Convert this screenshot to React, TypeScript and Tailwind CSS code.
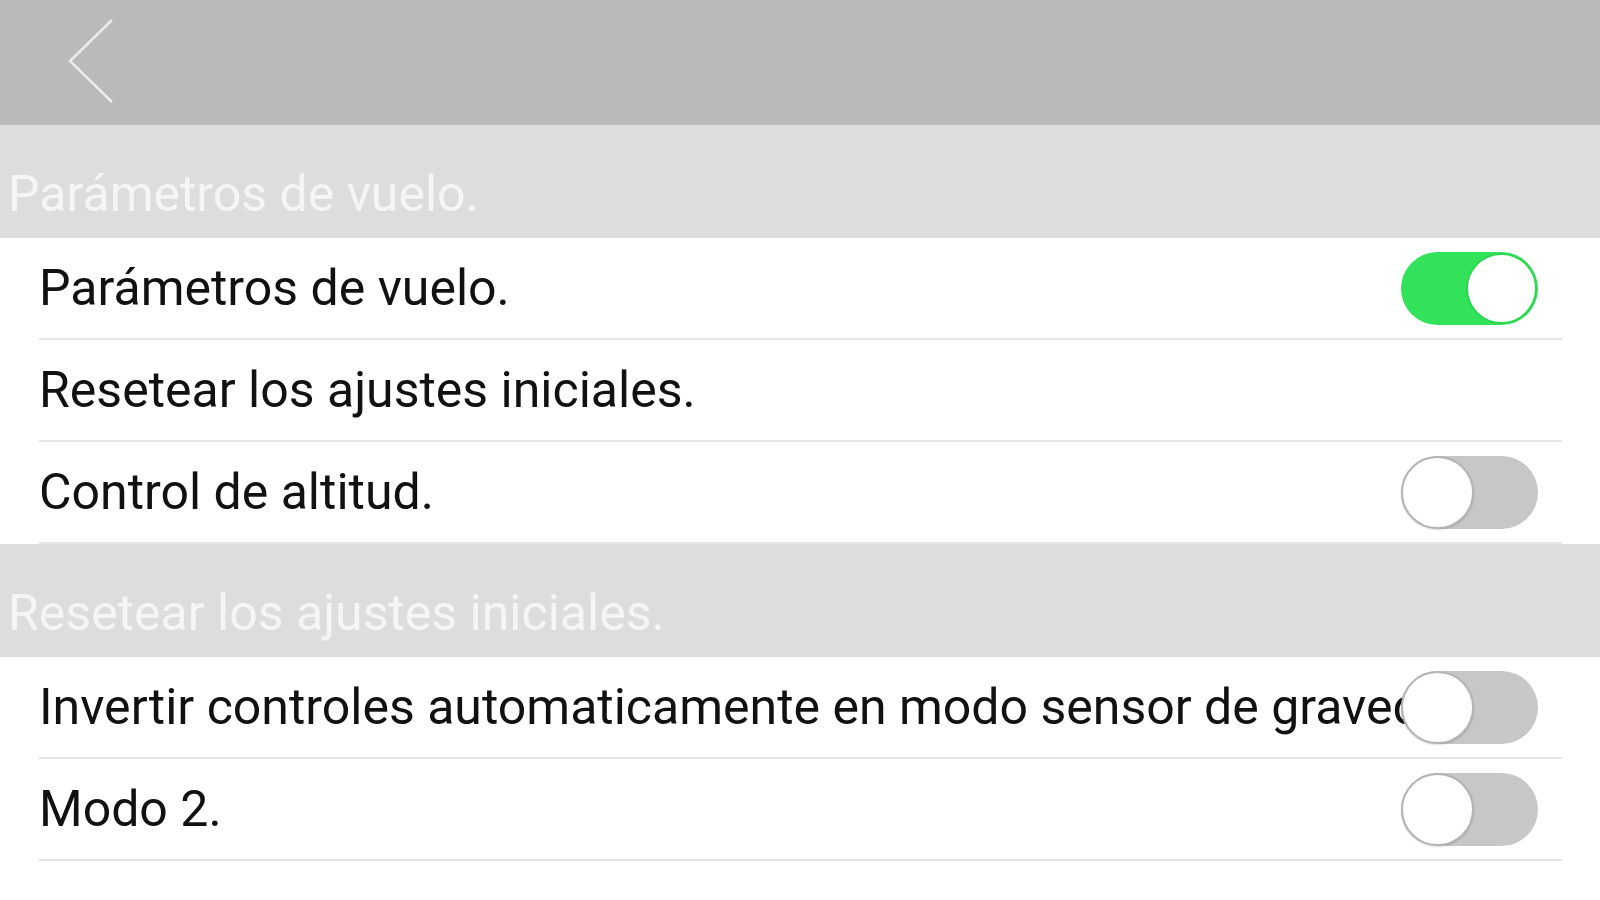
import React from "react";

type Row = { label: string; toggle?: boolean; on?: boolean };

const sections: { title: string; rows: Row[] }[] = [
  {
    title: "Parámetros de vuelo.",
    rows: [
      { label: "Parámetros de vuelo.", toggle: true, on: true },
      { label: "Resetear los ajustes iniciales." },
      { label: "Control de altitud.", toggle: true, on: false },
    ],
  },
  {
    title: "Resetear los ajustes iniciales.",
    rows: [
      { label: "Invertir controles automaticamente en modo sensor de gravedad.", toggle: true, on: false },
      { label: "Modo 2.", toggle: true, on: false },
    ],
  },
];

function Toggle({ on }: { on: boolean }) {
  if (on) {
    return (
      <div className="relative z-10 flex h-[73px] w-[137px] shrink-0 items-center justify-end rounded-full bg-[#33e25b] p-[1px]">
        <div className="h-[71px] w-[71px] rounded-full border-2 border-[#2bd651] bg-white" />
      </div>
    );
  }
  return (
    <div className="relative z-10 flex h-[73px] w-[137px] shrink-0 items-center justify-start rounded-full bg-[#c7c7c7]">
      <div className="h-[73px] w-[73px] rounded-full border-2 border-[#b4b4b4] bg-white shadow-[0_1px_2px_rgba(0,0,0,0.15)]" />
    </div>
  );
}

export default function App() {
  return (
    <div className="h-[900px] w-full overflow-hidden bg-white font-['Roboto',sans-serif]">
      {/* top bar */}
      <div className="flex h-[125px] items-start bg-[#bababa]">
        <svg className="ml-[66px] mt-[18px]" width="50" height="88" viewBox="0 0 50 88" fill="none">
          <polyline points="46,2 4,43 46,84" stroke="#ececec" strokeWidth="2.5" />
        </svg>
      </div>

      {sections.map((s) => (
        <div key={s.title}>
          <div className="h-[113px] bg-[#dddddd] pl-[8px] pt-[41px] text-[50px] leading-[56px] text-[#f5f5f5]">
            {s.title}
          </div>
          {s.rows.map((r) => (
            <div
              key={r.label}
              className="ml-[39px] mr-[38px] flex h-[102px] items-center border-b-2 border-[#e6e6e6] pr-[24px]"
            >
              <div className="min-w-0 flex-1 whitespace-nowrap text-[50px] leading-[56px] text-[#111111]">
                {r.label}
              </div>
              {r.toggle && <Toggle on={!!r.on} />}
            </div>
          ))}
        </div>
      ))}
    </div>
  );
}
